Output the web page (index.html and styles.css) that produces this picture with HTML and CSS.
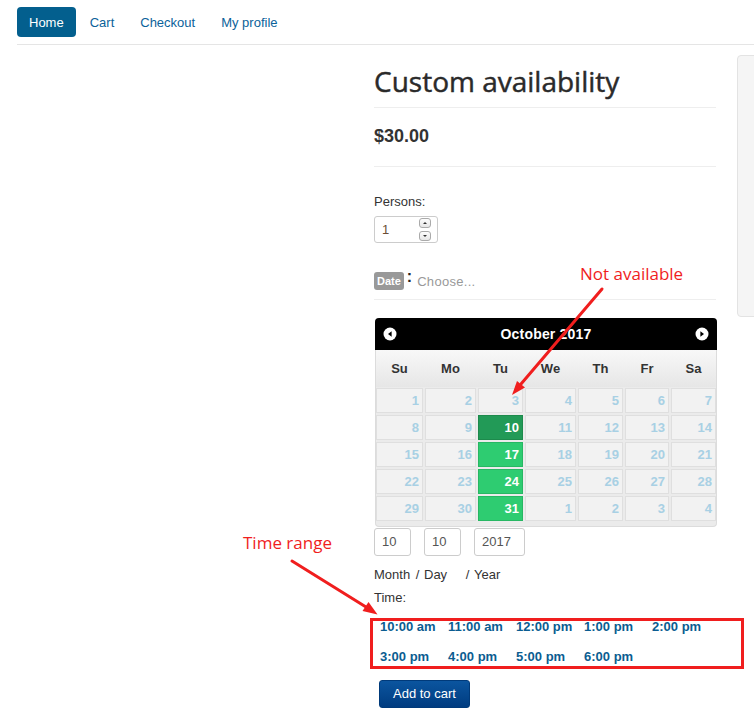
FILE: index.html
```html
<!DOCTYPE html>
<html lang="en">
<head>
<meta charset="utf-8">
<title>Custom availability</title>
<link rel="stylesheet" href="styles.css">
</head>
<body>
<div class="page">
  <nav class="nav">
    <a class="pill active" href="#">Home</a>
    <a class="pill" href="#">Cart</a>
    <a class="pill" href="#">Checkout</a>
    <a class="pill" href="#">My profile</a>
  </nav>

  <div class="main">
    <div class="left-col"></div>
    <div class="content">
      <h1 class="title">Custom availability</h1>
      <div class="price">$30.00</div>

      <div class="persons-label">Persons:</div>
      <div class="spinner">
        <span class="spin-value">1</span>
        <span class="spin-btns">
          <span class="spin-btn"><span class="tri-up"></span></span>
          <span class="spin-btn"><span class="tri-down"></span></span>
        </span>
      </div>

      <div class="date-row">
        <span class="date-label"><span class="badge">Date</span><span class="colon">:</span></span>
        <span class="choose">Choose...</span>
      </div>

      <div class="calendar">
        <div class="cal-head">
          <svg class="cal-nav" width="14" height="14" viewBox="0 0 14 14"><circle cx="7" cy="7" r="6.5" fill="#fff"/><path d="M8.6 4.2 L5 7 L8.6 9.8 Z" fill="#000"/></svg>
          <span class="cal-title">October 2017</span>
          <svg class="cal-nav" width="14" height="14" viewBox="0 0 14 14"><circle cx="7" cy="7" r="6.5" fill="#fff"/><path d="M5.4 4.2 L9 7 L5.4 9.8 Z" fill="#000"/></svg>
        </div>
        <div class="cal-days">
          <span>Su</span><span>Mo</span><span>Tu</span><span>We</span><span>Th</span><span>Fr</span><span>Sa</span>
        </div>
        <div class="cal-grid">
          <span class="cell">1</span><span class="cell">2</span><span class="cell">3</span><span class="cell">4</span><span class="cell">5</span><span class="cell">6</span><span class="cell">7</span>
          <span class="cell">8</span><span class="cell">9</span><span class="cell sel">10</span><span class="cell">11</span><span class="cell">12</span><span class="cell">13</span><span class="cell">14</span>
          <span class="cell">15</span><span class="cell">16</span><span class="cell avail">17</span><span class="cell">18</span><span class="cell">19</span><span class="cell">20</span><span class="cell">21</span>
          <span class="cell">22</span><span class="cell">23</span><span class="cell avail">24</span><span class="cell">25</span><span class="cell">26</span><span class="cell">27</span><span class="cell">28</span>
          <span class="cell">29</span><span class="cell">30</span><span class="cell avail">31</span><span class="cell">1</span><span class="cell">2</span><span class="cell">3</span><span class="cell">4</span>
        </div>
      </div>

      <div class="date-fields">
        <span class="field f-month">10</span>
        <span class="field f-day">10</span>
        <span class="field f-year">2017</span>
        <span class="lbl">Month</span>
        <span class="lbl sep">/</span>
        <span class="lbl">Day</span>
        <span class="lbl sep">/</span>
        <span class="lbl">Year</span>
      </div>

      <div class="time-label">Time:</div>
      <div class="times">
        <a class="slot" href="#">10:00 am</a>
        <a class="slot" href="#">11:00 am</a>
        <a class="slot" href="#">12:00 pm</a>
        <a class="slot" href="#">1:00 pm</a>
        <a class="slot" href="#">2:00 pm</a>
        <a class="slot" href="#">3:00 pm</a>
        <a class="slot" href="#">4:00 pm</a>
        <a class="slot" href="#">5:00 pm</a>
        <a class="slot" href="#">6:00 pm</a>
      </div>

      <button class="add-btn" type="button">Add to cart</button>
    </div>
    <div class="sidebar"></div>
  </div>

  <svg class="overlay" width="754" height="722" viewBox="0 0 754 722">
    <line x1="602" y1="289" x2="521" y2="384" stroke="#f01e1e" stroke-width="3" stroke-linecap="round"/>
    <polygon points="512,395 525,387.5 517,381" fill="#f01e1e"/>
    <line x1="292" y1="561" x2="366" y2="607" stroke="#f01e1e" stroke-width="3" stroke-linecap="round"/>
    <polygon points="377.5,614.5 362.5,611 368.5,602" fill="#f01e1e"/>
    <rect x="371.5" y="619.5" width="371" height="48" fill="none" stroke="#f01e1e" stroke-width="3"/>
  </svg>
  <div class="note note-na">Not available</div>
  <div class="note note-tr">Time range</div>
</div>
</body>
</html>
```

FILE: styles.css
```css
html, body {
  margin: 0;
  padding: 0;
  overflow: hidden;
  background: #fff;
}

body {
  font-family: "Liberation Sans", Arial, sans-serif;
  font-size: 13px;
  color: #333;
}

.page {
  position: relative;
  width: 754px;
  min-height: 722px;
}

/* Nav */
.nav {
  display: flex;
  margin-left: 17px;
  padding: 7px 0;
  border-bottom: 1px solid #e5e5e5;
}

.pill {
  display: block;
  height: 30px;
  line-height: 32px;
  padding: 0 12px;
  margin-right: 2px;
  border-radius: 4px;
  color: #0b629a;
  text-decoration: none;
}

.pill.active {
  background: #035f8e;
  color: #fff;
}

/* Main layout */
.main {
  display: grid;
  grid-template-columns: 357px 342px 60px;
  margin-left: 17px;
  align-items: start;
}

.content {
  display: flex;
  flex-direction: column;
  align-items: flex-start;
}

.title {
  align-self: stretch;
  margin: 17px 0 0;
  padding-bottom: 7px;
  border-bottom: 1px solid #eee;
  font-family: "Open Sans", "Liberation Sans", sans-serif;
  font-weight: 400;
  font-size: 28px;
  line-height: 38px;
  color: #2a2a2a;
  -webkit-text-stroke: 0.45px #2a2a2a;
}

.price {
  align-self: stretch;
  margin-top: 18px;
  padding-bottom: 20px;
  border-bottom: 1px solid #eee;
  font-weight: bold;
  font-size: 18px;
  line-height: 20px;
  color: #333;
}

.persons-label {
  margin-top: 25px;
  line-height: 19px;
}

.spinner {
  margin-top: 5px;
  box-sizing: border-box;
  width: 64px;
  height: 27px;
  border: 1px solid #ccc;
  border-radius: 3px;
  display: flex;
  align-items: center;
  justify-content: space-between;
  padding: 0 6px 0 7px;
}

.spin-value {
  color: #6a4d36;
  line-height: 18px;
}

.spin-btns {
  display: flex;
  flex-direction: column;
  gap: 3px;
}

.spin-btn {
  box-sizing: border-box;
  width: 12px;
  height: 10px;
  border: 1px solid #aaa;
  border-radius: 3px;
  background: linear-gradient(#fdfdfd, #e6e6e6);
  display: flex;
  align-items: center;
  justify-content: center;
}

.tri-up {
  width: 0;
  height: 0;
  border-left: 2px solid transparent;
  border-right: 2px solid transparent;
  border-bottom: 2px solid #333;
}

.tri-down {
  width: 0;
  height: 0;
  border-left: 2px solid transparent;
  border-right: 2px solid transparent;
  border-top: 2px solid #333;
}

/* Date row */
.date-row {
  align-self: stretch;
  margin-top: 28px;
  height: 20px;
  padding-bottom: 8px;
  border-bottom: 1px solid #eee;
  display: flex;
  align-items: flex-start;
}

.date-label {
  display: flex;
  align-items: flex-start;
}

.badge {
  margin-top: 1px;
  height: 18px;
  line-height: 18px;
  padding: 0 3px;
  border-radius: 3px;
  background: #999;
  color: #fff;
  font-weight: bold;
  font-size: 11px;
}

.colon {
  margin-left: 3px;
  font-size: 16px;
  font-weight: bold;
  line-height: 12px;
  color: #222;
}

.choose {
  margin-left: 5px;
  margin-top: 2px;
  line-height: 18px;
  color: #999;
  letter-spacing: 0.3px;
}

/* Calendar */
.calendar {
  margin-top: 18px;
  margin-left: 1px;
  width: 342px;
  box-sizing: border-box;
  border: 1px solid #dcdcdc;
  border-top: 0;
  border-radius: 4px;
  background: #ebebeb;
  padding-bottom: 5px;
}

.cal-head {
  margin: 0 -1px;
  height: 32px;
  background: #000;
  border-radius: 4px 4px 0 0;
  display: flex;
  align-items: center;
  justify-content: space-between;
  padding: 0 8px;
}

.cal-title {
  color: #fff;
  font-weight: bold;
  font-size: 14px;
  letter-spacing: 0.2px;
}

.cal-nav {
  display: block;
}

.cal-days {
  display: grid;
  grid-template-columns: 47px 51px 45px 51px 45px 44px 45px;
  column-gap: 2px;
  height: 37px;
  align-items: center;
  background: linear-gradient(#f8f8f8, #e6e6e6);
}

.cal-days span {
  text-align: center;
  font-weight: bold;
  font-size: 13px;
  color: #333;
}

.cal-grid {
  display: grid;
  grid-template-columns: 47px 51px 45px 51px 45px 44px 45px;
  grid-auto-rows: 25px;
  gap: 2px;
  padding-top: 1px;
}

.cell {
  box-sizing: border-box;
  border: 1px solid #dfdfdf;
  background: #f2f2f2;
  text-align: right;
  padding-right: 3px;
  font-weight: bold;
  font-size: 13px;
  line-height: 23px;
  color: #a8d0e4;
}

.cell.sel {
  background: #229a57;
  border-color: #1d8a4c;
  color: #fff;
}

.cell.avail {
  background: #2ecc71;
  border-color: #27b763;
  color: #fff;
}

/* Date fields */
.date-fields {
  margin-top: 1px;
  display: grid;
  grid-template-columns: 37px 13px 37px 13px 51px;
  grid-template-rows: 28px 18px;
  row-gap: 10px;
}

.field {
  box-sizing: border-box;
  border: 1px solid #ccc;
  border-radius: 3px;
  line-height: 26px;
  padding-left: 7px;
  color: #555;
}

.f-month { grid-column: 1; }
.f-day { grid-column: 3; }
.f-year { grid-column: 5; }

.lbl {
  grid-row: 2;
  line-height: 18px;
  white-space: nowrap;
}

.lbl.sep {
  text-align: center;
}

.time-label {
  margin-top: 5px;
  line-height: 18px;
}

.times {
  margin-top: 4px;
  padding-left: 6px;
  display: grid;
  grid-template-columns: repeat(5, 68px);
  grid-auto-rows: 30px;
  align-items: center;
}

.slot {
  font-weight: bold;
  font-size: 13px;
  color: #0b5d91;
  text-decoration: none;
  white-space: nowrap;
}

.add-btn {
  margin-top: 9px;
  margin-left: 5px;
  height: 28px;
  padding: 0 13px;
  border: 1px solid #003a7a;
  border-radius: 3px;
  background: linear-gradient(#0b559f, #003c80);
  color: #fff;
  font-family: "Liberation Sans", Arial, sans-serif;
  font-size: 13px;
  line-height: 26px;
}

/* Sidebar */
.sidebar {
  margin-top: 10px;
  margin-left: 21px;
  height: 262px;
  box-sizing: border-box;
  border: 1px solid #e3e3e3;
  border-radius: 4px;
  background: #f5f5f5;
}

/* Annotation overlay */
.overlay {
  position: absolute;
  top: 0;
  left: 0;
  pointer-events: none;
}

.note {
  position: absolute;
  font-family: "Open Sans", "Liberation Sans", sans-serif;
  font-size: 17px;
  line-height: 23px;
  color: #f01e1e;
  white-space: nowrap;
}

.note-na {
  left: 580px;
  top: 262px;
}

.note-tr {
  left: 243px;
  top: 531px;
}
```
